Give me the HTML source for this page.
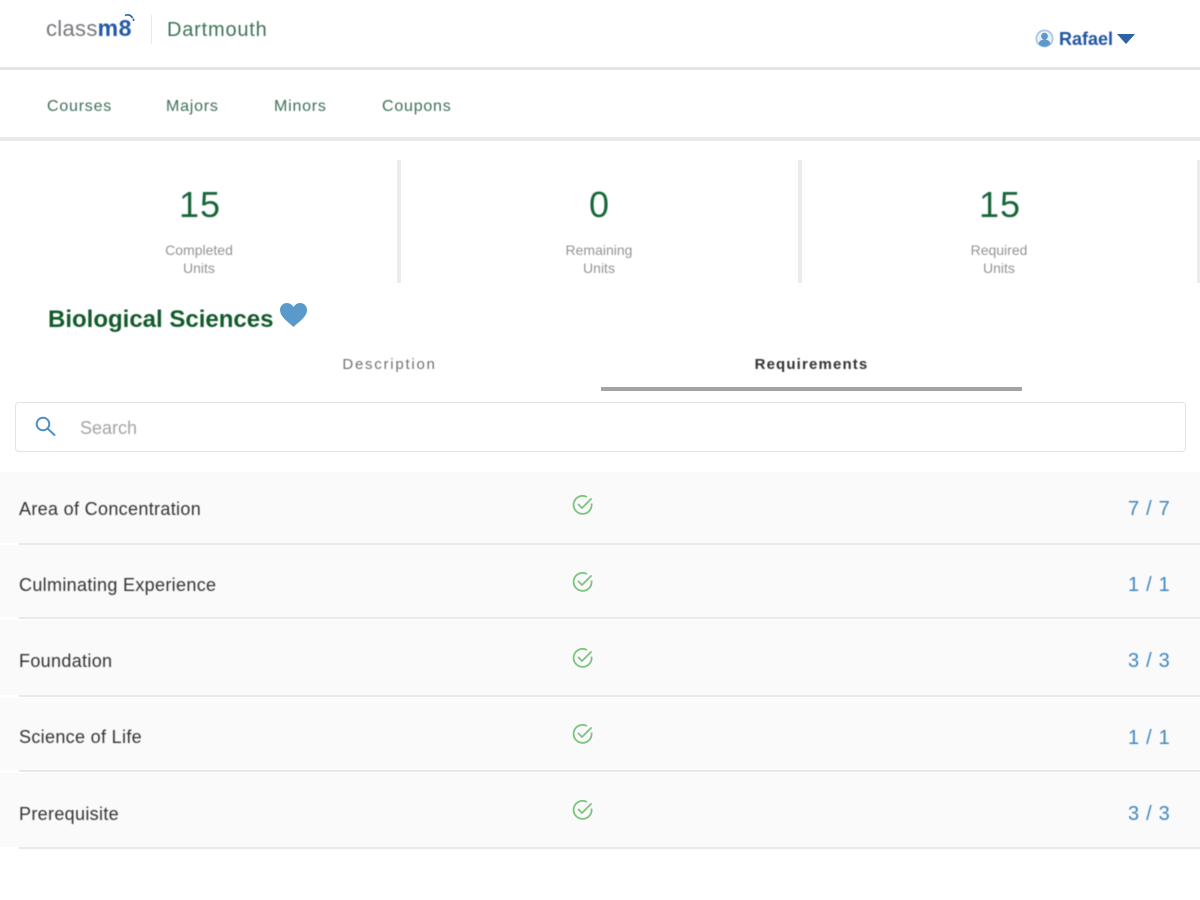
<!DOCTYPE html>
<html lang="en">
<head>
<meta charset="utf-8">
<title>Biological Sciences</title>
<style>
html,body{margin:0;padding:0;background:#fff}
body{width:1200px;height:900px;position:relative;overflow:hidden;font-family:"Liberation Sans",sans-serif}
.t{position:absolute;white-space:nowrap;filter:blur(.4px)}
.b{position:absolute}
.c{transform:translateX(-50%);text-align:center}
.nav{top:98px;font-size:16px;line-height:18px;color:#3f6f59;letter-spacing:.78px}
.num{top:184px;font-size:36px;line-height:42px;color:#176638;letter-spacing:1px}
.lab{font-size:14px;line-height:18px;color:#949494}
.row{left:0;width:1200px;background:#fafafa}
.line{left:19px;width:1181px;height:2px;background:#e9e9e9}
.name{left:19px;font-size:18px;line-height:22px;color:#333;letter-spacing:.33px}
.frac{font-size:20px;line-height:24px;color:#3f86c0;letter-spacing:.7px;left:1128px}
svg{position:absolute;overflow:visible}
</style>
</head>
<body>
<!-- header -->
<div class="t" style="left:46px;top:16px;font-size:22px;line-height:24px;color:#74777c;letter-spacing:.3px">class<span style="color:#2258a6;font-weight:700;font-size:23px;letter-spacing:.6px">m8</span></div>
<svg style="left:122px;top:12px;filter:blur(.3px)" width="14" height="14" viewBox="0 0 14 14" fill="none" stroke="#2a5ea8" stroke-width="1.6"><path d="M3 3.500C6 2 9 3 10.500 6"/><path d="M11.500 6.500v2.500"/></svg>
<div class="b" style="left:151px;top:15px;width:1px;height:29px;background:#e8e8e8"></div>
<div class="t" style="left:167px;top:18px;font-size:20px;line-height:24px;color:#3e7459;letter-spacing:.8px">Dartmouth</div>
<svg style="left:1035px;top:29px;filter:blur(.3px)" width="19" height="19" viewBox="0 0 19 19"><circle cx="9.500" cy="9.500" r="9" fill="#a9c8e4"/><circle cx="9.500" cy="9.500" r="7.300" fill="#e9f1f8"/><circle cx="9.500" cy="7.200" r="3.400" fill="#5d97cb"/><path d="M3.500 14.500c1-3 3.500-4 6-4s5 1 6 4c-1.500 2-3.700 3-6 3s-4.500-1-6-3z" fill="#5d97cb"/></svg>
<div class="t" style="left:1059px;top:29px;font-size:18px;line-height:20px;color:#1f55a0;font-weight:700">Rafael</div>
<svg style="left:1117px;top:34px" width="18" height="10" viewBox="0 0 18 10"><path d="M0 0h18L9 10z" fill="#2d62a8"/></svg>
<div class="b" style="left:0;top:67px;width:1200px;height:3px;background:#e4e4e4"></div>

<!-- nav -->
<div class="t nav" style="left:47px">Courses</div>
<div class="t nav" style="left:166px">Majors</div>
<div class="t nav" style="left:274px">Minors</div>
<div class="t nav" style="left:382px">Coupons</div>
<div class="b" style="left:0;top:137px;width:1200px;height:4px;background:#e9e9e9"></div>

<!-- stats -->
<div class="b" style="left:397px;top:160px;width:4px;height:123px;background:#ececec"></div>
<div class="b" style="left:798px;top:160px;width:4px;height:123px;background:#ececec"></div>
<div class="b" style="left:1197px;top:160px;width:3px;height:123px;background:#ececec"></div>
<div class="t num c" style="left:200px">15</div>
<div class="t num c" style="left:599.500px">0</div>
<div class="t num c" style="left:1000px">15</div>
<div class="t lab c" style="left:199px;top:241px">Completed<br>Units</div>
<div class="t lab c" style="left:599px;top:241px">Remaining<br>Units</div>
<div class="t lab c" style="left:999px;top:241px">Required<br>Units</div>

<!-- title -->
<div class="t" style="left:48px;top:305px;font-size:24px;line-height:30px;font-weight:700;color:#125a2b">Biological Sciences</div>
<svg style="left:280px;top:303px;filter:blur(.3px)" width="27" height="24" viewBox="0 0 27 24"><path d="M13.500 24C9 19.500 0 14 0 7 0 2.800 3.200 0 6.800 0c2.800 0 5.200 1.500 6.700 4C15 1.500 17.400 0 20.200 0 23.800 0 27 2.800 27 7c0 7-9 12.500-13.500 17z" fill="#5a9acb"/></svg>

<!-- tabs -->
<div class="t c" style="left:389.500px;top:356px;font-size:15px;line-height:18px;color:#707070;letter-spacing:1.750px">Description</div>
<div class="t c" style="left:811.500px;top:356px;font-size:15px;line-height:18px;color:#333;letter-spacing:1.150px;font-weight:700">Requirements</div>
<div class="b" style="left:601px;top:387px;width:421px;height:4px;background:#a3a3a3"></div>

<!-- search -->
<div class="b" style="left:15px;top:402px;width:1169px;height:48px;border:1.500px solid #e3e3e3;border-radius:4px;background:#fff"></div>
<svg style="left:35px;top:416px" width="21" height="21" viewBox="0 0 21 21" fill="none" stroke="#4f8fc4" stroke-width="2"><circle cx="8" cy="8" r="6.300"/><path d="M12.500 12.500L19.500 19" stroke-linecap="round"/></svg>
<div class="t" style="left:80px;top:418px;font-size:18px;line-height:20px;color:#a3a3a3">Search</div>

<!-- rows -->
<div class="b row" style="top:472px;height:71px"></div>
<div class="b row" style="top:545px;height:72px"></div>
<div class="b row" style="top:620px;height:75px"></div>
<div class="b row" style="top:698px;height:72px"></div>
<div class="b row" style="top:773px;height:74px"></div>
<div class="b line" style="top:543px"></div>
<div class="b line" style="top:617px"></div>
<div class="b line" style="top:695px"></div>
<div class="b line" style="top:770px"></div>
<div class="b line" style="top:847px"></div>

<div class="t name" style="top:498px">Area of Concentration</div>
<div class="t name" style="top:574px">Culminating Experience</div>
<div class="t name" style="top:650px">Foundation</div>
<div class="t name" style="top:726px">Science of Life</div>
<div class="t name" style="top:803px">Prerequisite</div>

<svg style="left:573px;top:495px" width="20" height="20" viewBox="0 0 20 20" fill="none" stroke="#7cc47f" stroke-width="1.800"><path d="M18.500 8.500A9 9 0 1 1 14 2"/><path d="M5.500 9.500l3.500 3.500 9-9" stroke-linecap="round"/></svg>
<svg style="left:573px;top:572px" width="20" height="20" viewBox="0 0 20 20" fill="none" stroke="#7cc47f" stroke-width="1.800"><path d="M18.500 8.500A9 9 0 1 1 14 2"/><path d="M5.500 9.500l3.500 3.500 9-9" stroke-linecap="round"/></svg>
<svg style="left:573px;top:648px" width="20" height="20" viewBox="0 0 20 20" fill="none" stroke="#7cc47f" stroke-width="1.800"><path d="M18.500 8.500A9 9 0 1 1 14 2"/><path d="M5.500 9.500l3.500 3.500 9-9" stroke-linecap="round"/></svg>
<svg style="left:573px;top:724px" width="20" height="20" viewBox="0 0 20 20" fill="none" stroke="#7cc47f" stroke-width="1.800"><path d="M18.500 8.500A9 9 0 1 1 14 2"/><path d="M5.500 9.500l3.500 3.500 9-9" stroke-linecap="round"/></svg>
<svg style="left:573px;top:800px" width="20" height="20" viewBox="0 0 20 20" fill="none" stroke="#7cc47f" stroke-width="1.800"><path d="M18.500 8.500A9 9 0 1 1 14 2"/><path d="M5.500 9.500l3.500 3.500 9-9" stroke-linecap="round"/></svg>

<div class="t frac" style="top:497px">7 / 7</div>
<div class="t frac" style="top:573px">1 / 1</div>
<div class="t frac" style="top:649px">3 / 3</div>
<div class="t frac" style="top:726px">1 / 1</div>
<div class="t frac" style="top:802px">3 / 3</div>
</body>
</html>
